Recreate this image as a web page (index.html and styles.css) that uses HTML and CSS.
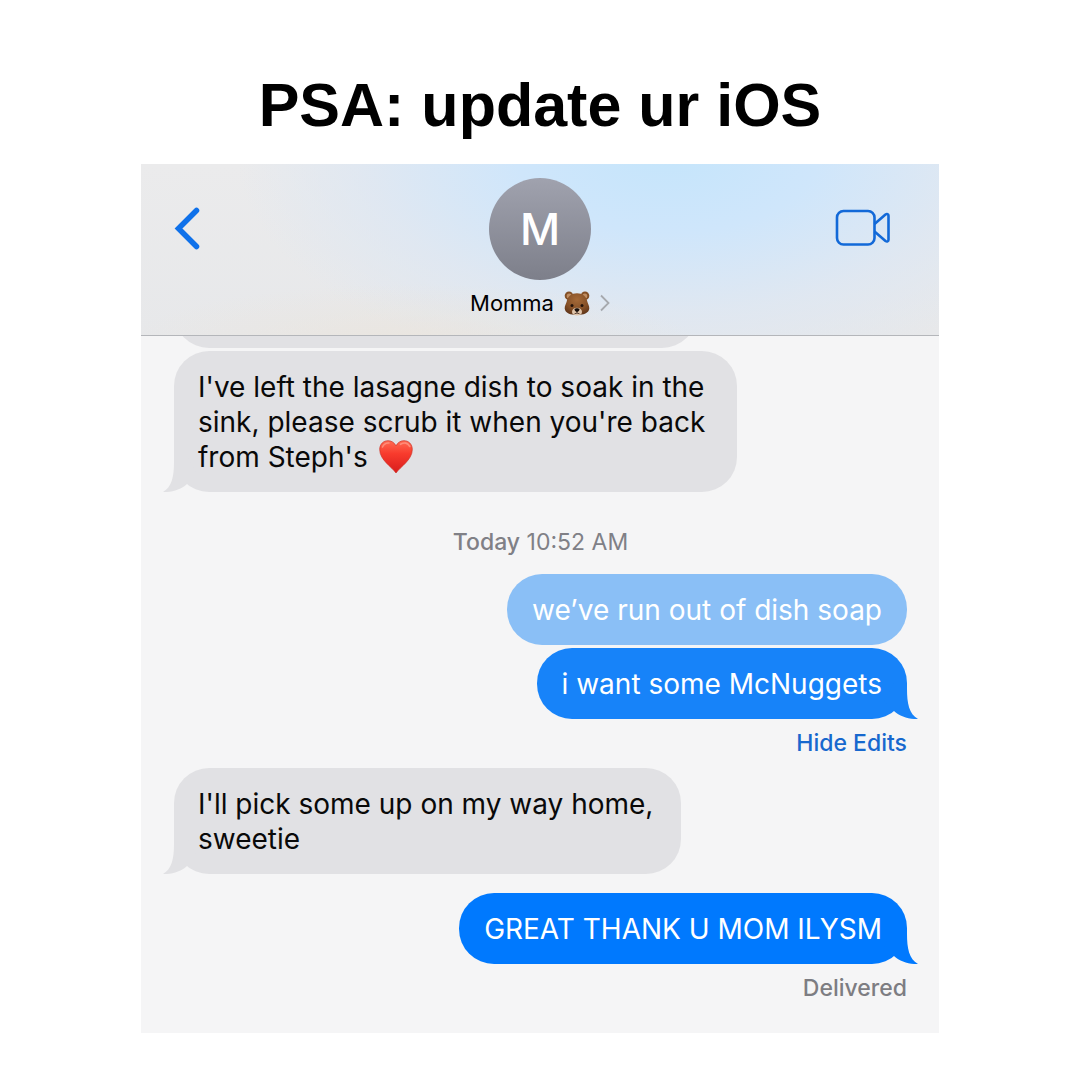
FILE: index.html
```html
<!DOCTYPE html>
<html lang="en">
<head>
<meta charset="utf-8">
<meta name="viewport" content="width=device-width, initial-scale=1">
<title>PSA: update ur iOS</title>
<link rel="stylesheet" href="styles.css">
</head>
<body>
<svg class="defs" aria-hidden="true">
  <defs>
    <symbol id="tail" viewBox="0 0 40 36">
      <path d="M16 0H29V6C29 20 31 31 40 36C31 36.500 22 33.500 16 28L6 18Z"/>
    </symbol>
  </defs>
</svg>
<main class="post">
  <h1 class="headline">PSA: update ur iOS</h1>
  <section class="phone">
    <header class="bar">
      <button class="icon-button" type="button" aria-label="Back">
        <svg width="28" height="44" viewBox="0 0 28 44" fill="none"><path d="M23.500 4.500L5.500 22.500L23.500 40.500" stroke="#0f71ea" stroke-width="5.500" stroke-linecap="round" stroke-linejoin="miter"/></svg>
      </button>
      <div class="contact">
        <div class="avatar">M</div>
        <button class="name" type="button">
          <span>Momma</span>
          <svg class="bear" role="img" aria-label="bear" viewBox="0 0 26 25">
            <defs><radialGradient id="fur" cx=".5" cy=".3" r=".75"><stop offset="0" stop-color="#a56a38"/><stop offset=".6" stop-color="#855027"/><stop offset="1" stop-color="#5b3218"/></radialGradient></defs>
            <circle cx="5" cy="4.800" r="4.300" fill="#835027"/><circle cx="21" cy="4.800" r="4.300" fill="#835027"/>
            <circle cx="5.200" cy="5" r="2.500" fill="#c08e62"/><circle cx="20.800" cy="5" r="2.500" fill="#c08e62"/>
            <path d="M13 2.200C18.500 2.200 22.500 5.500 23.300 10.500C23.700 12.500 25.500 14.500 25.300 17.500C25 22 19.500 24 13 24S1 22 .7 17.500C.5 14.500 2.300 12.500 2.700 10.500C3.500 5.500 7.500 2.200 13 2.200Z" fill="url(#fur)"/>
            <circle cx="8" cy="14.500" r="1.500" fill="#24130a"/><circle cx="18" cy="14.500" r="1.500" fill="#24130a"/>
            <path d="M13 16.800C16 16.800 18 18.700 18 21C18 23.400 16 24.400 13 24.400S8 23.400 8 21C8 18.700 10 16.800 13 16.800Z" fill="#dfc4aa"/>
            <path d="M10.500 18C11.500 17 14.500 17 15.500 18C15.800 19.500 14 21 13 21S10.200 19.500 10.500 18Z" fill="#150d0a"/>
            <path d="M13 20.500V22M10.500 22.800Q13 21.300 15.500 22.800" fill="none" stroke="#39231a" stroke-width=".8"/>
          </svg>
          <svg width="10" height="18" viewBox="0 0 10 18" fill="none"><path d="M1 1.500L8.500 9L1 16.500" stroke="#a6a9ae" stroke-width="1.800"/></svg>
        </button>
      </div>
      <button class="icon-button icon-button--end" type="button" aria-label="Video call">
        <svg width="56" height="38" viewBox="0 0 56 38" fill="none" stroke="#1269d8" stroke-width="2.600" stroke-linejoin="round"><rect x="2" y="2" width="37.500" height="33.500" rx="6.500"/><path d="M39.500 15L50.500 5.500C52 4.500 53.500 5 53.500 6.800V30.700C53.500 32.500 52 33 50.500 32L39.500 22.500"/></svg>
      </button>
    </header>
    <div class="thread">
      <div class="bubble received previous" aria-hidden="true"></div>
      <div class="bubble received">I've left the lasagne dish to soak in the<br>sink, please scrub it when you're back<br>from Steph's <svg class="heart" role="img" aria-label="red heart" viewBox="0 0 34 34"><defs><linearGradient id="red" x1="0" y1="0" x2="0" y2="1"><stop offset="0" stop-color="#ff6a52"/><stop offset=".4" stop-color="#f83b2d"/><stop offset="1" stop-color="#d81c1c"/></linearGradient></defs><path d="M17 33C13 27 .7 20 .7 9.500C.7 4 4.500 .7 9 .7C12.600 .7 15.600 2.700 17 6C18.400 2.700 21.400 .7 25 .7C29.500 .7 33.300 4 33.300 9.500C33.300 20 21 27 17 33Z" fill="url(#red)" stroke="#cf3226" stroke-width=".7"/><path d="M3.500 7Q5.500 2.500 10 3M21.500 4.300Q27.500 .8 30.800 6.500" fill="none" stroke="#ff9f8d" stroke-width="1.600" stroke-linecap="round" opacity=".7"/></svg><svg class="tail"><use href="#tail"/></svg></div>
      <p class="stamp"><b>Today</b> 10:52 AM</p>
      <div class="bubble sent original">we’ve run out of dish soap</div>
      <div class="bubble sent edited">i want some McNuggets<svg class="tail"><use href="#tail"/></svg></div>
      <button class="note edits" type="button">Hide Edits</button>
      <div class="bubble received reply">I'll pick some up on my way home,<br>sweetie<svg class="tail"><use href="#tail"/></svg></div>
      <div class="bubble sent last">GREAT THANK U MOM ILYSM<svg class="tail"><use href="#tail"/></svg></div>
      <p class="note">Delivered</p>
    </div>
  </section>
</main>
</body>
</html>
```
FILE: styles.css
```css
* { box-sizing: border-box; }
body { margin: 0; background: #fff; color: #090909; font-family: Inter, "Liberation Sans", sans-serif; }
button { margin: 0; padding: 0; border: 0; background: none; color: inherit; font: inherit; cursor: pointer; }
svg { display: block; }
p { margin: 0; }
.defs { position: absolute; width: 0; height: 0; }
.post { padding: 70px 16px 46px; }
.headline { margin: 0 0 24px; font: bold 61px/70px "Liberation Sans", Arial, sans-serif; text-align: center; color: #000; }
.phone { max-width: 798px; margin: 0 auto; background: #f5f5f6; }

.bar {
  display: grid; grid-template-columns: 1fr auto 1fr; align-items: start;
  padding: 14px 48px 18px 32px; border-bottom: 1px solid #b4b6ba;
  background:
    radial-gradient(ellipse 36% 36% at 34% 106%, rgba(236, 228, 217, .65), rgba(236, 228, 217, 0)),
    radial-gradient(ellipse 54% 130% at 66% -5%, #c5e5fb 0%, #cfe6fb 35%, rgba(221, 231, 243, .8) 70%, rgba(232, 234, 238, 0) 100%),
    linear-gradient(#ebebec, #e7e8ea);
}
.icon-button { margin-top: 28px; justify-self: start; }
.icon-button--end { margin-top: 31px; justify-self: end; }
.contact { display: flex; flex-direction: column; align-items: center; gap: 9px; margin-left: 16px; }
.avatar {
  display: grid; place-items: center; width: 102px; height: 102px; border-radius: 50%;
  background: linear-gradient(#a0a2ae, #7d7f8a);
  color: #fff; font-size: 44px; font-weight: 500; line-height: 52px; font-family: Inter, sans-serif;
}
.name { display: flex; align-items: center; gap: 10px; font-size: 22px; line-height: 28px; color: #000; }
.bear { width: 26px; height: 25px; }

.thread { display: flex; flex-direction: column; align-items: flex-start; padding: 0 32px 31px 33px; overflow: hidden; }
.bubble { position: relative; padding: 19px 25px 17px; border-radius: 35px; font-size: 28px; line-height: 35px; }
.received { padding: 19px 32px 17px 24px; background: #e1e1e4; fill: #e1e1e4; }
.reply { padding-right: 28px; }
.previous { width: 523px; max-width: 100%; height: 72px; margin: -60px 0 3px; }
.sent { align-self: flex-end; color: #fff; background: #0079fe; fill: #0079fe; }
.original { margin-bottom: 3px; background: #8abff6; }
.edited { background: #1783f9; fill: #1783f9; }
.last { margin-top: 19px; }
.tail { position: absolute; right: -11px; bottom: 0; width: 40px; height: 36px; }
.received .tail { right: auto; left: -11px; transform: scaleX(-1); }
.heart { display: inline-block; width: 34px; height: 34px; margin: -4px 0 -4px 3px; vertical-align: -3px; }
.stamp { align-self: center; margin: 36px 0 18px; font-size: 23px; line-height: 28px; color: #808086; }
.stamp b { font-weight: 500; }
.note { align-self: flex-end; margin-top: 10px; font-size: 23px; line-height: 28px; font-weight: 500; color: #7d7d82; }
.edits { margin-bottom: 11px; color: #1768ce; }
```
